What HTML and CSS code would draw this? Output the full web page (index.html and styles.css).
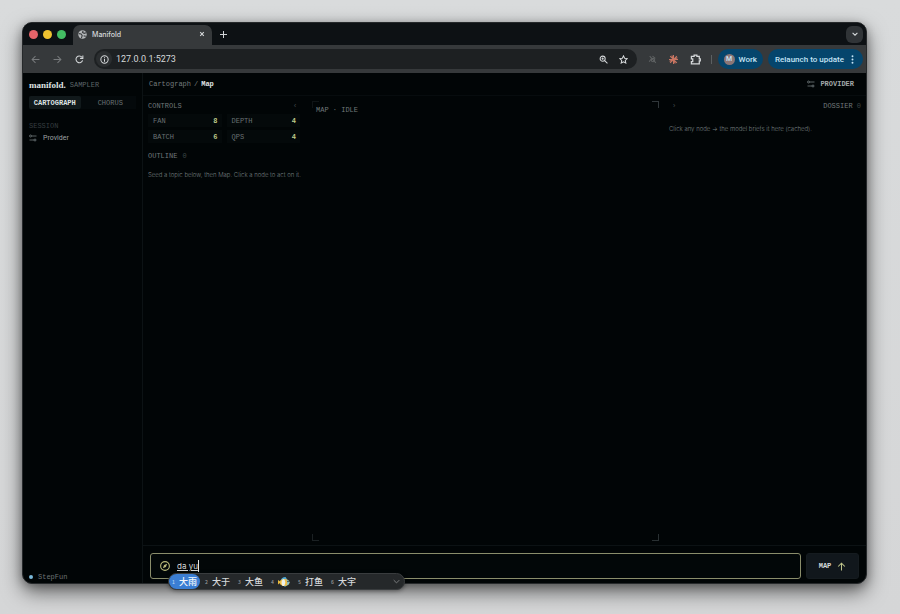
FILE: index.html
```html
<!DOCTYPE html>
<html lang="en">
<head>
<meta charset="utf-8">
<title>Manifold</title>
<link rel="stylesheet" href="styles.css">
</head>
<body>
<div class="window">
  <header class="tabstrip">
    <div class="lights"><i class="light red"></i><i class="light yellow"></i><i class="light green"></i></div>
    <div class="tab">
      <svg class="globe" viewBox="0 0 16 16"><circle cx="8" cy="8" r="7.5" fill="#b5b8ba"/><path d="M1.500 6.500l4 .5 2 3-1.500 4.500M9 1.500L8 4.500l3 1.500 3.500-1M10 10.500l4 .5" fill="none" stroke="#3b3e40" stroke-width="2"/></svg>
      <span class="tab-title">Manifold</span>
      <button class="icon-btn" aria-label="Close tab"><svg class="tiny" viewBox="0 0 10 10"><path d="M2 2l6 6M8 2l-6 6"/></svg></button>
    </div>
    <button class="icon-btn new-tab" aria-label="New tab"><svg class="small" viewBox="0 0 10 10"><path d="M5 0v10M0 5h10"/></svg></button>
    <button class="icon-btn tab-search" aria-label="Search tabs"><svg class="tiny" viewBox="0 0 10 10"><path d="M1 3l4 4 4-4"/></svg></button>
  </header>
  <div class="toolbar">
    <nav class="nav">
      <button class="icon-btn dim" aria-label="Back"><svg class="icon" viewBox="0 0 16 16"><path d="M15 8H2M8 2L2 8l6 6"/></svg></button>
      <button class="icon-btn dim" aria-label="Forward"><svg class="icon" viewBox="0 0 16 16"><path d="M1 8h13M8 2l6 6-6 6"/></svg></button>
      <button class="icon-btn" aria-label="Reload"><svg class="icon" viewBox="0 0 16 16"><path d="M13.500 9.500A6 6 0 1 1 12.500 4M14 1v5H9"/></svg></button>
    </nav>
    <div class="address">
      <span class="site"><svg class="icon" viewBox="0 0 16 16"><circle cx="8" cy="8" r="6.500"/><path d="M8 7v5M8 4v1.600"/></svg></span>
      <input class="url" aria-label="Address" value="127.0.0.1:5273">
      <button class="icon-btn" aria-label="Zoom"><svg class="icon" viewBox="0 0 16 16"><circle cx="6.500" cy="6.500" r="4.500"/><path d="M10 10l5 5M4.500 6.500h4M6.500 4.500v4"/></svg></button>
      <button class="icon-btn" aria-label="Bookmark"><svg class="icon" viewBox="0 0 16 16"><path d="M8 1.500l2 4.300 4.700.6-3.500 3.200.9 4.700L8 12l-4.100 2.300.9-4.700L1.300 6.400 6 5.800z"/></svg></button>
    </div>
    <div class="extensions">
      <svg class="icon faint" viewBox="0 0 16 16"><path d="M3 2l11 12M2 12l4-5M8 2l5 4"/><circle cx="9" cy="9" r="3"/></svg>
      <svg class="icon burst" viewBox="0 0 16 16"><path d="M8 0v16M0 8h16M2 2l12 12M14 2L2 14M5 1l6 14M1 11l14-6"/></svg>
      <svg class="puzzle" viewBox="0 0 16 16"><path d="M2 3.500h4V1.500h4v2h3.500V7H15v3h-1.500v4.500H2V11h2V7H2z"/></svg>
      <i class="rule"></i>
    </div>
    <button class="pill work"><span class="avatar">M</span>Work</button>
    <button class="pill update">Relaunch to update<svg class="dots" viewBox="0 0 4 14"><circle cx="2" cy="2" r="1.500"/><circle cx="2" cy="7" r="1.500"/><circle cx="2" cy="12" r="1.500"/></svg></button>
  </div>

  <div class="app">
    <aside class="sidebar">
      <div class="brand"><strong class="logo">manifold.</strong><span class="label muted">SAMPLER</span></div>
      <div class="modes"><button class="mode active">CARTOGRAPH</button><button class="mode">CHORUS</button></div>
      <div class="label session">SESSION</div>
      <a class="side-link" href="#provider"><svg class="slider" viewBox="0 0 16 16"><path d="M5 4h10M1 12h9"/><circle cx="3" cy="4" r="2"/><circle cx="12" cy="12" r="2"/></svg>Provider</a>
      <div class="status"><i class="status-dot"></i>StepFun</div>
    </aside>
    <main class="main">
      <div class="topbar">
        <div class="crumbs"><span>Cartograph</span><span>/</span><strong>Map</strong></div>
        <button class="provider"><svg class="slider" viewBox="0 0 16 16"><path d="M5 4h10M1 12h9"/><circle cx="3" cy="4" r="2"/><circle cx="12" cy="12" r="2"/></svg>PROVIDER</button>
      </div>
      <div class="columns">
        <section class="controls">
          <div class="head label"><span>CONTROLS</span><button class="fold" aria-label="Collapse controls">‹</button></div>
          <dl class="params">
            <div class="param"><dt>FAN</dt><dd>8</dd></div>
            <div class="param"><dt>DEPTH</dt><dd>4</dd></div>
            <div class="param"><dt>BATCH</dt><dd>6</dd></div>
            <div class="param"><dt>QPS</dt><dd>4</dd></div>
          </dl>
          <div class="outline label"><span>OUTLINE</span><span class="count">0</span></div>
          <p class="hint">Seed a topic below, then Map. Click a node to act on it.</p>
        </section>
        <section class="map">
          <i class="corner tl"></i><i class="corner tr"></i><i class="corner bl"></i><i class="corner br"></i>
          <span class="label">MAP · IDLE</span>
        </section>
        <section class="dossier">
          <div class="head label"><button class="fold" aria-label="Collapse dossier">›</button><span>DOSSIER <span class="count">0</span></span></div>
          <p class="hint">Click any node → the model briefs it here (cached).</p>
        </section>
      </div>
      <form class="composer">
        <div class="seed">
          <svg class="compass" viewBox="0 0 16 16"><circle cx="8" cy="8" r="7"/><path d="M11.500 4.500l-2 5-5 2 2-5z" fill="currentColor" stroke="none"/></svg>
          <input class="seed-input" aria-label="Seed topic" value="da yu">
          <div class="ime">
            <span class="cand chosen"><small>1</small>大雨</span>
            <span class="cand"><small>2</small>大于</span>
            <span class="cand"><small>3</small>大鱼</span>
            <span class="cand"><small>4</small><svg class="fish" viewBox="0 0 24 20"><path d="M5 8Q7 0 15 0l4 6z" fill="#4fa9d6"/><path d="M9 15l5 5 5-5z" fill="#4fa9d6"/><path d="M6 10L0 6v9z" fill="#e8b93c"/><ellipse cx="13" cy="11" rx="10" ry="7" fill="#f0bf45"/><path d="M12 4q5 7 0 14H9q-4-7 0-13z" fill="#eef1ea"/><path d="M17 5q3 6 0 12 6-2 6-6t-6-6z" fill="#7cc0dd"/><circle cx="20" cy="9" r="1.300" fill="#222"/></svg></span>
            <span class="cand"><small>5</small>打鱼</span>
            <span class="cand"><small>6</small>大宇</span>
            <svg class="small more" viewBox="0 0 10 10"><path d="M1 3l4 4 4-4"/></svg>
          </div>
        </div>
        <button class="submit" type="button">MAP<svg class="icon" viewBox="0 0 16 16"><path d="M8 15V2M2 8l6-6 6 6"/></svg></button>
      </form>
    </main>
  </div>
</div>
</body>
</html>
```

FILE: styles.css
```css
* { box-sizing: border-box; }

body {
  margin: 0;
  min-height: 100vh;
  padding: 22px 33px 30px 22px;
  display: flex;
  background: linear-gradient(#d9dbdc, #d5d6d7);
  font-family: Inter, "Noto Sans CJK SC", sans-serif;
  font-size: 7px;
  color: #d5d8da;
}

button, input {
  font: inherit;
  color: inherit;
  background: none;
  border: 0;
  padding: 0;
  margin: 0;
  outline: 0;
}

svg {
  display: block;
  flex: none;
  fill: none;
  stroke: currentColor;
  stroke-width: 1.8;
}

.tiny { width: 6px; height: 6px; }
.small { width: 7px; height: 7px; stroke-width: 1.4; }
.icon { width: 9px; height: 9px; }
.puzzle { width: 11px; height: 11px; }
.icon-btn { display: flex; align-items: center; justify-content: center; }

.window {
  flex: 1;
  min-width: 0;
  display: flex;
  flex-direction: column;
  border: 1px solid #26292b;
  border-radius: 10px;
  background: #010506;
  box-shadow: 0 8px 20px rgba(0, 0, 0, .55), 0 2px 8px rgba(0, 0, 0, .25);
}

/* Browser frame */
.tabstrip {
  display: flex;
  height: 22px;
  align-items: center;
  padding: 0 3px 0 6px;
  background: #0d1114;
  border-radius: 9px 9px 0 0;
}
.lights { display: flex; gap: 5px; margin-right: 7px; }
.light { width: 9px; height: 9px; border-radius: 50%; }
.red { background: #e5646a; }
.yellow { background: #efc230; }
.green { background: #43bd63; }
.tab {
  align-self: flex-end;
  width: 139px;
  height: 20px;
  display: flex;
  align-items: center;
  gap: 5px;
  padding: 0 7px 2px 5px;
  border-radius: 7px 7px 0 0;
  background: #36393b;
}
.globe { width: 9px; height: 9px; stroke: none; }
.tab-title { flex: 1; font-weight: 500; }
.new-tab { margin-left: 8px; }
.tab-search {
  margin-left: auto;
  width: 17px;
  height: 17px;
  border-radius: 6px;
  background: #303437;
}

.toolbar {
  display: flex;
  height: 28px;
  align-items: center;
  padding: 0 3px 0 8px;
  background: #36393b;
}
.nav { display: flex; gap: 13px; margin-right: 10px; }
.dim { color: #777a7c; }
.address {
  flex: 1;
  min-width: 0;
  display: flex;
  align-items: center;
  gap: 11px;
  height: 20px;
  padding: 0 9px 0 2px;
  border-radius: 10px;
  background: #1d2022;
}
.site {
  display: flex;
  align-items: center;
  justify-content: center;
  width: 16px;
  height: 16px;
  border-radius: 50%;
  background: #2b2e30;
}
.url {
  flex: 1;
  min-width: 0;
  margin-left: -7px;
  font-family: Roboto, sans-serif;
  font-size: 9px;
}
.extensions { display: flex; align-items: center; gap: 12px; margin-left: 11px; }
.faint { color: #5f6263; }
.burst { color: #c87562; }
.rule { width: 1px; height: 9px; margin-left: -2px; background: #5c6062; }
.pill {
  display: flex;
  align-items: center;
  height: 20px;
  border-radius: 10px;
  background: #05456c;
  color: #c4e4f6;
  font-family: Roboto, sans-serif;
  font-size: 8px;
  font-weight: 500;
}
.work { gap: 4px; margin-left: 6px; padding: 0 6px; }
.avatar {
  width: 11px;
  height: 11px;
  border-radius: 50%;
  font-size: 7px;
  line-height: 11px;
  text-align: center;
  background: #8b7676;
}
.update { gap: 7px; margin-left: 5px; padding: 0 9px 0 7px; }
.dots { width: 3px; height: 9px; fill: currentColor; stroke: none; }

/* Application */
.app {
  flex: 1;
  display: flex;
  min-height: 0;
  font-family: "Liberation Mono", monospace;
}
.label { color: #70787a; line-height: 10px; }
.sidebar {
  width: 120px;
  display: flex;
  flex-direction: column;
  padding: 0 6px 1px;
  border-right: 1px solid #0c1214;
}
.brand { display: flex; height: 23px; align-items: center; gap: 4px; }
.logo { font-family: "Liberation Serif", serif; font-size: 9px; color: #dfe2e2; }
.muted { color: #5c6466; }
.modes { display: flex; height: 13px; gap: 4px; background: #04090b; }
.mode { flex: 1; color: #697173; border-radius: 2px; }
.active { background: #11191b; color: #dfe3e3; font-weight: 700; }
.session { margin-top: 12px; color: #363d40; }
.side-link {
  display: flex;
  align-items: center;
  gap: 6px;
  height: 13px;
  color: #9ca2a4;
  text-decoration: none;
  font-family: Roboto, sans-serif;
}
.slider { width: 8px; height: 8px; color: #7b8487; stroke-width: 1.5; }
.status {
  display: flex;
  align-items: center;
  gap: 5px;
  margin-top: auto;
  line-height: 10px;
  color: #6b7274;
}
.status-dot { width: 4px; height: 4px; border-radius: 50%; background: #7ab9da; }

.main { flex: 1; min-width: 0; display: flex; flex-direction: column; }
.topbar {
  display: flex;
  height: 23px;
  align-items: center;
  justify-content: space-between;
  padding: 0 12px 0 6px;
  border-bottom: 1px solid #070c0e;
}
.crumbs { display: flex; gap: 3px; color: #747b7d; }
.crumbs strong { color: #e1e5e5; }
.provider { display: flex; align-items: center; gap: 5px; color: #a2a8a9; font-weight: 700; }
.columns { flex: 1; display: flex; padding: 5px 5px 4px; }
.controls { width: 152px; }
.head { display: flex; align-items: center; justify-content: space-between; }
.fold { width: 10px; line-height: 8px; color: #424a4c; }
.params {
  display: grid;
  grid-template-columns: 1fr 1fr;
  gap: 3px 5px;
  margin: 3px 0 8px;
}
.param {
  display: flex;
  height: 13px;
  align-items: center;
  justify-content: space-between;
  padding: 0 4px 0 5px;
  background: #04090a;
  color: #697173;
}
.param dd { margin: 0; color: #bfc98b; font-weight: 700; }
.outline { display: flex; gap: 5px; }
.count { color: #3d4547; }
.hint {
  margin: 8px 0 0;
  font-family: Inter, sans-serif;
  font-size: 6px;
  font-weight: 300;
  line-height: 12px;
  white-space: nowrap;
  color: #788082;
}
.map { position: relative; flex: 1; margin: 0 10px 0 12px; padding: 4px; }
.map .label { display: block; }
.corner { position: absolute; width: 7px; height: 7px; border: 0 solid #1b2123; }
.tl { top: 0; left: 0; border-width: 1px 0 0 1px; border-color: #0f1416; }
.tr { top: 0; right: 0; border-width: 1px 1px 0 0; border-color: #30373a; }
.bl { bottom: 0; left: 0; border-width: 0 0 1px 1px; }
.br { bottom: 0; right: 0; border-width: 0 1px 1px 0; border-color: #293032; }
.dossier { width: 192px; }
.dossier .hint { margin-top: 12px; }

.composer {
  display: flex;
  gap: 5px;
  padding: 7px 7px 4px;
  border-top: 1px solid #0c1214;
}
.seed {
  position: relative;
  flex: 1;
  display: flex;
  align-items: center;
  gap: 7px;
  height: 26px;
  padding: 0 9px;
  border: 1px solid #8a8d6b;
  border-radius: 3px;
  background: #020708;
  font-family: Inter, sans-serif;
}
.compass { width: 10px; height: 10px; color: #b8b87a; }
.seed-input {
  field-sizing: content;
  height: 12px;
  border-right: 1px solid #e3e6e6;
  font-size: 8px;
  line-height: 12px;
  text-decoration: underline;
  text-underline-offset: 1px;
}
.submit {
  display: flex;
  align-items: center;
  justify-content: center;
  gap: 6px;
  width: 53px;
  border: 1px solid #151b1f;
  border-radius: 3px;
  background: #11171c;
  font-weight: 700;
}
.submit .icon { color: #c0c68b; }

/* Input method candidates */
.ime {
  position: absolute;
  top: 19px;
  left: 17px;
  width: 237px;
  height: 17px;
  display: flex;
  align-items: center;
  gap: 2px;
  padding-right: 4px;
  border: 1px solid #393c3e;
  border-radius: 9px;
  background: #25282a;
  box-shadow: 0 1px 4px rgba(0, 0, 0, .4);
  font-family: "Noto Sans CJK SC", sans-serif;
  font-weight: 500;
}
.cand {
  display: flex;
  align-items: center;
  gap: 2px;
  height: 15px;
  padding: 0 3px;
  border-radius: 8px;
  font-size: 9px;
  line-height: 15px;
}
.cand small { width: 5px; font-size: 5px; color: #96999b; }
.chosen { background: #3b7ed3; color: #f2f7fc; }
.chosen small { color: #b5d3f5; }
.fish { width: 12px; height: 10px; stroke: none; }
.more { margin-left: auto; color: #7b7e80; }
```
